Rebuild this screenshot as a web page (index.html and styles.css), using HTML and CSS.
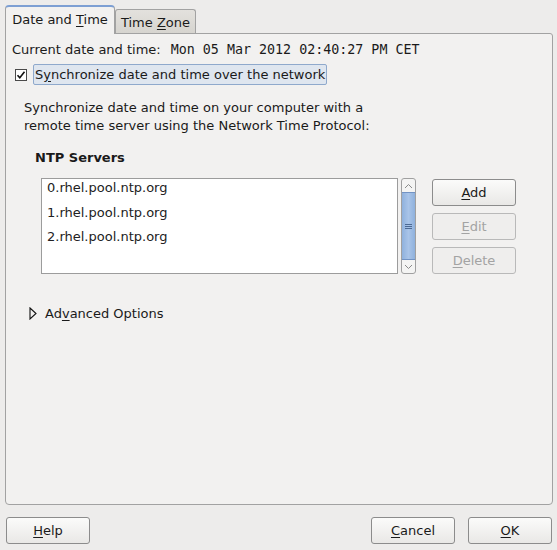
FILE: index.html
```html
<!DOCTYPE html>
<html>
<head>
<meta charset="utf-8">
<link rel="stylesheet" href="styles.css">
</head>
<body>
<div class="dialog">
  <div class="tabs">
    <div class="tab active"><span>Date and <u>T</u>ime</span></div>
    <div class="tab"><span>Time <u>Z</u>one</span></div>
  </div>
  <div class="panel">
    <div class="row current">
      <span>Current date and time:</span>
      <span class="mono">Mon 05 Mar 2012 02:40:27 PM CET</span>
    </div>
    <div class="row sync">
      <span class="check"><svg width="12" height="12" viewBox="0 0 12 12"><rect x="0.5" y="0.5" width="11" height="11" fill="#fff" stroke="#4a4a4a"/><path d="M2.5 6.2 L4.8 8.8 L9.5 2.8" fill="none" stroke="#111" stroke-width="1.6"/></svg></span>
      <span class="sync-label">S<u>y</u>nchronize date and time over the network</span>
    </div>
    <p class="desc">Synchronize date and time on your computer with a<br>remote time server using the Network Time Protocol:</p>
    <div class="heading">NTP Servers</div>
    <div class="servers">
      <div class="list">
        <div class="item">0.rhel.pool.ntp.org</div>
        <div class="item">1.rhel.pool.ntp.org</div>
        <div class="item">2.rhel.pool.ntp.org</div>
      </div>
      <div class="scrollbar">
        <div class="arrow"><svg width="9" height="6" viewBox="0 0 9 6"><path d="M1 5 L4.5 1.5 L8 5" fill="none" stroke="#8a8a8a" stroke-width="1"/></svg></div>
        <div class="thumb"><svg width="7" height="7" viewBox="0 0 7 7"><path d="M0 1.5 H7 M0 3.5 H7 M0 5.5 H7" stroke="#4c6a94" stroke-width="1"/></svg></div>
        <div class="arrow"><svg width="9" height="6" viewBox="0 0 9 6"><path d="M1 1 L4.5 4.5 L8 1" fill="none" stroke="#8a8a8a" stroke-width="1"/></svg></div>
      </div>
      <div class="side-buttons">
        <div class="btn"><span><u>A</u>dd</span></div>
        <div class="btn disabled"><span><u>E</u>dit</span></div>
        <div class="btn disabled"><span><u>D</u>elete</span></div>
      </div>
    </div>
    <div class="expander">
      <svg width="8" height="13" viewBox="0 0 8 13"><path d="M1 1 L7 6.5 L1 12 Z" fill="none" stroke="#111" stroke-width="1.1"/></svg>
      <span>Ad<u>v</u>anced Options</span>
    </div>
  </div>
  <div class="actions">
    <div class="btn"><span><u>H</u>elp</span></div>
    <div class="spacer"></div>
    <div class="btn"><span><u>C</u>ancel</span></div>
    <div class="btn"><span><u>O</u>K</span></div>
  </div>
</div>
</body>
</html>
```
FILE: styles.css
```css
html, body {
  margin: 0;
  padding: 0;
  background: #edeceb;
}
body {
  width: 557px;
  height: 550px;
  overflow: hidden;
  font-family: "DejaVu Sans", "Liberation Sans", sans-serif;
  font-size: 13px;
  color: #1a1a1a;
}
u {
  text-decoration: underline;
  text-underline-offset: 2px;
}
.dialog {
  padding: 5px 5px 0 5px;
}
.tabs {
  display: flex;
  align-items: flex-end;
  height: 28px;
  position: relative;
  z-index: 2;
}
.tab {
  box-sizing: border-box;
  height: 24px;
  width: 81px;
  border: 1px solid #a2a2a2;
  border-bottom: none;
  border-radius: 3px 3px 0 0;
  background: linear-gradient(#e3e1dd, #d6d4cf);
  display: flex;
  align-items: center;
  justify-content: center;
  padding-top: 1px;
}
.tab.active {
  height: 29px;
  width: 110px;
  margin-bottom: -1px;
  background: #f2f1f0;
  border-color: #a2a2a2;
  border-top: 2px solid #7d9fd3;
  border-radius: 4px 4px 0 0;
  padding-top: 0;
  padding-bottom: 2px;
}
.panel {
  box-sizing: border-box;
  width: 548px;
  height: 472px;
  border: 1px solid #a2a2a2;
  border-radius: 0 3px 4px 4px;
  background: #f2f1f0;
  padding: 6px 6px;
  position: relative;
  z-index: 1;
}
.row {
  display: flex;
  align-items: center;
}
.current {
  height: 18px;
  gap: 10px;
}
.mono {
  font-family: "DejaVu Sans Mono", "Liberation Mono", monospace;
  font-size: 13.33px;
}
.sync {
  margin-top: 6px;
  height: 21px;
}
.check {
  display: flex;
  margin-left: 3px;
  width: 18px;
}
.sync-label {
  box-sizing: border-box;
  height: 21px;
  line-height: 19px;
  padding: 0 1px 0 1px;
  background: #dfe6ef;
  border: 1px solid #8fa9cc;
  border-radius: 2px;
}
.desc {
  margin: 14px 0 0 12px;
  line-height: 18px;
}
.heading {
  font-weight: bold;
  margin: 14px 0 0 23px;
  line-height: 18px;
}
.servers {
  display: flex;
  margin: 11px 0 0 29px;
}
.list {
  box-sizing: border-box;
  width: 357px;
  height: 96px;
  background: #fff;
  border: 1px solid #9c9c9c;
  padding-top: 0;
}
.item {
  height: 24.5px;
  line-height: 17px;
  padding-left: 5px;
  color: #222;
}
.scrollbar {
  box-sizing: border-box;
  width: 15px;
  height: 96px;
  margin-left: 3px;
  border: 1px solid #a0a0a0;
  border-radius: 3px;
  background: #f4f4f3;
  display: flex;
  flex-direction: column;
}
.arrow {
  height: 13px;
  display: flex;
  align-items: center;
  justify-content: center;
}
.thumb {
  flex: 1;
  background: linear-gradient(90deg, #8fb1dd, #a9c4e8 50%, #8fb1dd);
  border-top: 1px solid #7293c4;
  border-bottom: 1px solid #7293c4;
  display: flex;
  align-items: center;
  justify-content: center;
}
.side-buttons {
  display: flex;
  flex-direction: column;
  gap: 7px;
  margin-left: 16px;
  margin-top: 1px;
}
.btn {
  box-sizing: border-box;
  width: 84px;
  height: 27px;
  border: 1px solid #8c8c8c;
  border-radius: 3px;
  background: linear-gradient(#fbfbfa, #e9e8e6);
  display: flex;
  align-items: center;
  justify-content: center;
  color: #1a1a1a;
}
.btn.disabled {
  border-color: #b9b9b9;
  background: #efeeed;
  color: #a3a3a3;
}
.expander {
  display: flex;
  align-items: center;
  margin: 30px 0 0 17px;
  height: 18px;
  gap: 8px;
}
.actions {
  display: flex;
  margin-top: 12px;
  padding-left: 1px;
  gap: 13px;
}
.actions .spacer {
  flex: 1;
}
```
